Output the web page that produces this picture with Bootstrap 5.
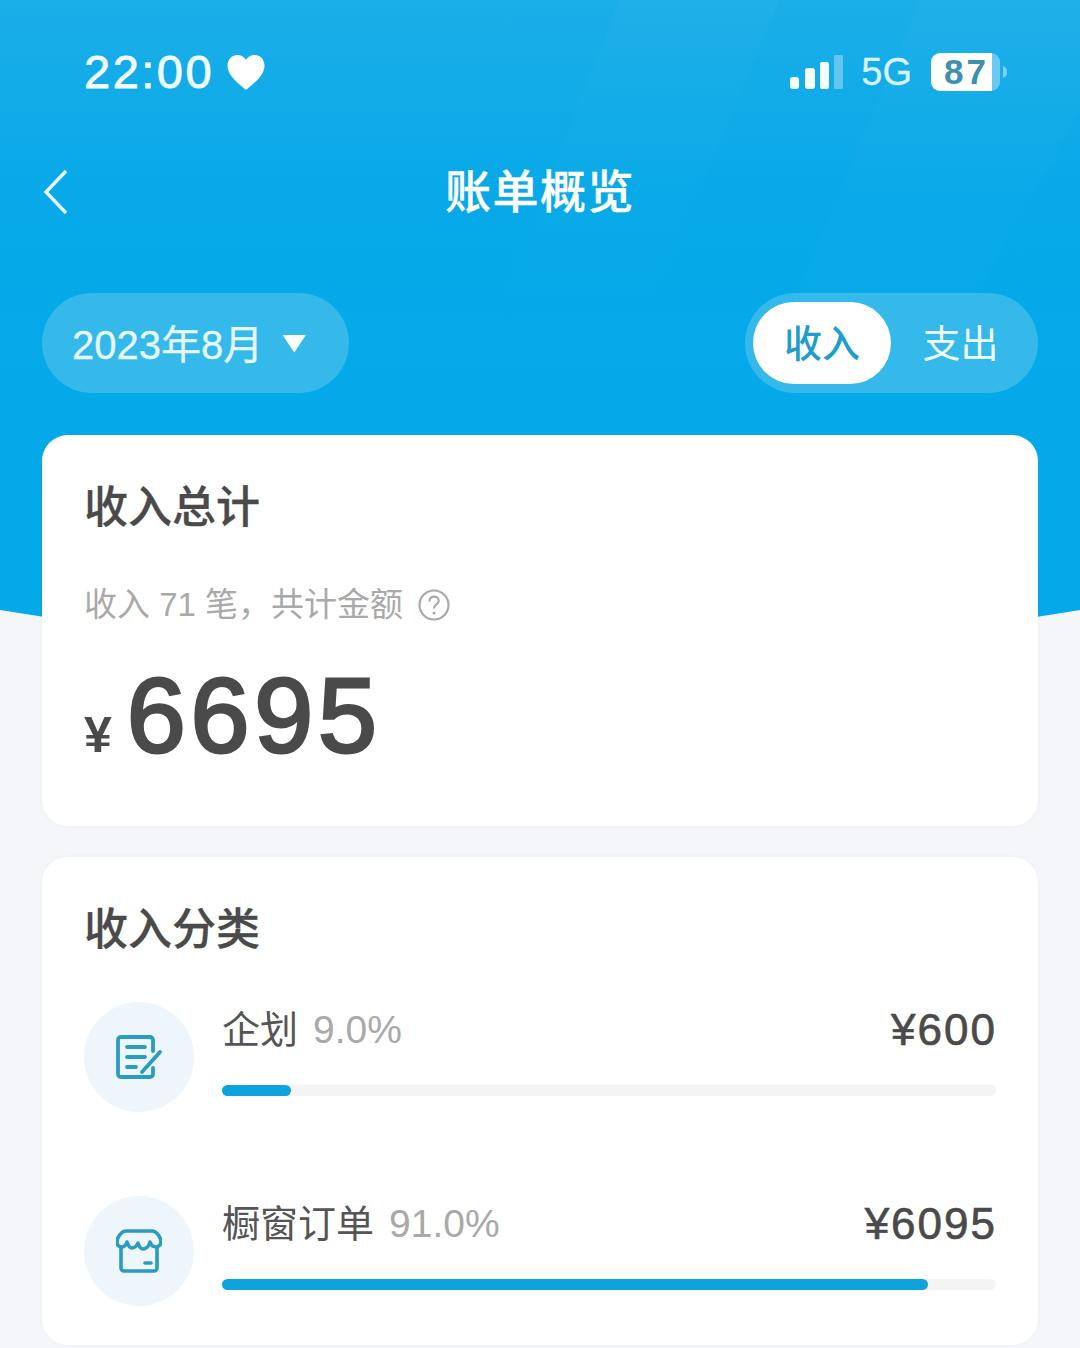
<!DOCTYPE html>
<html lang="zh-CN">
<head>
    <meta charset="UTF-8">
    <title>账单概览</title>
    <link href="https://cdn.jsdelivr.net/npm/bootstrap@5.3.3/dist/css/bootstrap.min.css" rel="stylesheet">
    <style>
        body { background: #f5f6f9; font-family: "Liberation Sans", "Noto Sans CJK SC", sans-serif; color: #4a4a4a; overflow: hidden; }
        .page-wrap { position: relative; width: 1080px; height: 1348px; overflow: hidden; padding: 0 42px; }
        .hero-bg { position: absolute; left: 0; top: 0; z-index: 0; }
        .page-inner { position: relative; z-index: 1; }
        .status-row { height: 144px; padding: 44px 31px 0 42px; color: #fff; align-items: flex-start; }
        .status-time { font-size: 47px; line-height: 56px; letter-spacing: 2.5px; -webkit-text-stroke: .8px #f2fcff; color: #f2fcff; margin-right: 12px; }
        .status-5g { font-size: 38px; line-height: 56px; color: #d8f3fd; margin: 0 19px 0 18px; -webkit-text-stroke: .3px #d8f3fd; }
        .battery-box { width: 69px; height: 38px; background: linear-gradient(90deg, #fff 0, #fff 89%, #6cc8f0 89%); border-radius: 9px; color: #3f8fb0; font-size: 35px; font-weight: 700; line-height: 38px; padding-left: 13px; letter-spacing: 3px; }
        .tip-mark { margin-left: 3px; }
        .title-row { height: 96px; position: relative; }
        .back-btn { position: absolute; left: 0; top: 24px; }
        .title-text { font-size: 46px; font-weight: 500; color: #fff; line-height: 96px; letter-spacing: 1.5px; -webkit-text-stroke: .4px #fff; }
        .filter-row { height: 100px; margin-top: 53px; }
        .month-pill { width: 307px; height: 100px; border-radius: 50px; background: #35b8ea; color: #e6f9ff; font-size: 40px; padding: 3px 0 0 30px; gap: 19px; -webkit-text-stroke: .3px #e6f9ff; }
        .caret-down { width: 24px; height: 18px; background: #fff; clip-path: polygon(0 0, 100% 0, 50% 100%); margin-top: -2px; }
        .type-switch { width: 293px; height: 100px; border-radius: 50px; background: #35b8ea; padding: 9px 8px; }
        .type-on { width: 138px; height: 82px; border-radius: 41px; background: #fff; color: #1f9ec9; font-size: 38px; font-weight: 500; line-height: 85px; text-align: center; }
        .type-off { flex: 1; font-size: 38px; line-height: 85px; text-align: center; color: #f0fbff; }
        .bill-card { background: #fff; border: 0; border-radius: 26px; padding: 0 42px; box-shadow: 0 0 4px rgba(120, 140, 160, .08); }
        .total-card { height: 391px; margin-top: 42px; padding-top: 45px; }
        .cat-card { height: 488px; margin-top: 31px; padding-top: 45px; }
        .card-head { font-size: 44px; font-weight: 500; line-height: 56px; color: #4a4a4a; margin: 0; -webkit-text-stroke: .3px #4a4a4a; }
        .sub-line { font-size: 33px; line-height: 44px; color: #a9a9a9; margin-top: 47px; gap: 15px; }
        .amount-line { margin-top: 28px; color: #4a4a4a; line-height: 120px; }
        .amount-sign { font-size: 50px; font-weight: 700; margin-right: 15px; }
        .amount-num { font-size: 106px; letter-spacing: 4.8px; -webkit-text-stroke: 3px #4a4a4a; }
        .cat-row { gap: 28px; }
        .cat-row-first { margin-top: 44px; }
        .cat-row-next { margin-top: 84px; }
        .cat-icon { width: 110px; height: 110px; border-radius: 50%; background: #eef6fb; flex-shrink: 0; }
        .cat-name { font-size: 38px; line-height: 56px; color: #555; }
        .cat-pct { font-size: 39px; line-height: 56px; color: #a9a9a9; margin-left: 15px; }
        .cat-money { font-size: 44px; line-height: 56px; color: #4a4a4a; letter-spacing: 2px; margin-right: -1px; -webkit-text-stroke: .7px #4a4a4a; }
        .bar-track { height: 11px; border-radius: 6px; background: #f4f4f5; margin-top: 27px; }
        .bar-fill { height: 11px; border-radius: 6px; background: #0ea3dc; }
    </style>
</head>
<body>

<div class="page-wrap">
    <!-- blue header with curved bottom -->
    <svg class="hero-bg" width="1080" height="720" viewBox="0 0 1080 720">
        <defs>
            <linearGradient id="heroFill" x1="0" y1="0" x2="0" y2="1">
                <stop offset="0" stop-color="#1baee8"/>
                <stop offset=".3" stop-color="#07a9e8"/>
                <stop offset="1" stop-color="#03a9ea"/>
            </linearGradient>
            <linearGradient id="streakFill" x1="0" y1="0" x2="0" y2="1">
                <stop offset="0" stop-color="#fff" stop-opacity=".02"/>
                <stop offset="1" stop-color="#fff" stop-opacity="0"/>
            </linearGradient>
        </defs>
        <path d="M0 0H1080V610Q540 700 0 610Z" fill="url(#heroFill)"/>
        <path d="M620 0H780L640 330H490Z" fill="url(#streakFill)"/>
        <path d="M920 0H1080V110L900 430H740Z" fill="url(#streakFill)"/>
    </svg>

    <div class="page-inner">
        <div class="status-row d-flex justify-content-between">
            <div class="d-flex align-items-center">
                <span class="status-time">22:00</span>
                <svg width="40" height="37" viewBox="0 0 40 38"><path d="M20 37C12 30 1 22 1 12 1 5 6 1 11 1c4 0 7 2 9 5 2-3 5-5 9-5 5 0 10 4 10 11 0 10-11 18-19 25z" fill="#fff"/></svg>
            </div>
            <div class="d-flex align-items-center">
                <svg width="53" height="36" viewBox="0 0 53 36">
                    <rect x="0" y="23" width="9" height="12" rx="3" fill="#f4fcff"/>
                    <rect x="15" y="14" width="10" height="21" rx="3" fill="#f4fcff"/>
                    <rect x="30" y="8" width="9" height="27" rx="2" fill="#f4fcff"/>
                    <rect x="44" y="1" width="9" height="34" rx="1" fill="#62c6ef"/>
                </svg>
                <span class="status-5g">5G</span>
                <div class="battery-box">87</div>
                <svg class="tip-mark" width="4" height="12" viewBox="0 0 4 12"><path d="M0 0c3 1 4 3 4 6s-1 5-4 6z" fill="#7fd0f2"/></svg>
            </div>
        </div>

        <div class="title-row text-center">
            <svg class="back-btn" width="28" height="48" viewBox="0 0 28 48"><path d="M24 3 4 24l20 21" fill="none" stroke="#e8f9ff" stroke-width="3.4"/></svg>
            <div class="title-text">账单概览</div>
        </div>

        <div class="filter-row d-flex justify-content-between">
            <div class="month-pill d-flex align-items-center">
                <span>2023年8月</span>
                <span class="caret-down"></span>
            </div>
            <div class="type-switch d-flex">
                <div class="type-on">收入</div>
                <div class="type-off">支出</div>
            </div>
        </div>

        <div class="card bill-card total-card">
            <h5 class="card-head">收入总计</h5>
            <div class="sub-line d-flex align-items-center">
                <span>收入 71 笔，共计金额</span>
                <svg width="32" height="32" viewBox="0 0 32 32">
                    <circle cx="16" cy="16" r="14.5" fill="none" stroke="#a9a9a9" stroke-width="2.2"/>
                    <path d="M11.5 12.5c0-3 2-4.800 4.700-4.800s4.500 1.800 4.500 4.200c0 3.500-4.700 3.600-4.700 7.600" fill="none" stroke="#a9a9a9" stroke-width="2.2"/>
                    <circle cx="16" cy="24" r="1.500" fill="#a9a9a9"/>
                </svg>
            </div>
            <div class="amount-line d-flex align-items-baseline">
                <span class="amount-sign">¥</span>
                <span class="amount-num">6695</span>
            </div>
        </div>

        <div class="card bill-card cat-card">
            <h5 class="card-head">收入分类</h5>

            <div class="cat-row cat-row-first d-flex">
                <div class="cat-icon d-flex align-items-center justify-content-center">
                    <svg width="48" height="46" viewBox="0 0 48 46" fill="none" stroke="#2a9cc2" stroke-width="3.800" stroke-linecap="round" stroke-linejoin="round">
                        <path d="M38 17V6a3 3 0 0 0-3-3H6a3 3 0 0 0-3 3V40a3 3 0 0 0 3 3H35a3 3 0 0 0 3-3V34"/>
                        <path d="M12 13H30M12 23H30M12 33H21"/>
                        <path d="M27 38 45 18"/>
                    </svg>
                </div>
                <div class="flex-grow-1">
                    <div class="d-flex justify-content-between">
                        <div><span class="cat-name">企划</span><span class="cat-pct">9.0%</span></div>
                        <div class="cat-money">¥600</div>
                    </div>
                    <div class="bar-track"><div class="bar-fill" style="width: 8.9%"></div></div>
                </div>
            </div>

            <div class="cat-row cat-row-next d-flex">
                <div class="cat-icon d-flex align-items-center justify-content-center">
                    <svg width="46" height="44" viewBox="0 0 46 44" fill="none" stroke="#2a9cc2" stroke-width="3.600" stroke-linecap="round" stroke-linejoin="round">
                        <path d="M10 2H36C41 2 45 9 45 13C45 16 42 18 40 18C37 18 35 16 34 13C33 17 30 20 27 20C25 20 23 17 22 14C21 17 18 19 16 19C13 19 12 16 11 13C10 16 8 18 6 18C3 18 1 16 1 13C1 9 5 2 10 2Z"/>
                        <path d="M5 19V39a3 3 0 0 0 3 3H38a3 3 0 0 0 3-3V19"/>
                        <path d="M29 34H35"/>
                    </svg>
                </div>
                <div class="flex-grow-1">
                    <div class="d-flex justify-content-between">
                        <div><span class="cat-name">橱窗订单</span><span class="cat-pct">91.0%</span></div>
                        <div class="cat-money">¥6095</div>
                    </div>
                    <div class="bar-track"><div class="bar-fill" style="width: 91.2%"></div></div>
                </div>
            </div>
        </div>
    </div>
</div>

<script src="https://cdn.jsdelivr.net/npm/bootstrap@5.3.3/dist/js/bootstrap.bundle.min.js"></script>
</body>
</html>
